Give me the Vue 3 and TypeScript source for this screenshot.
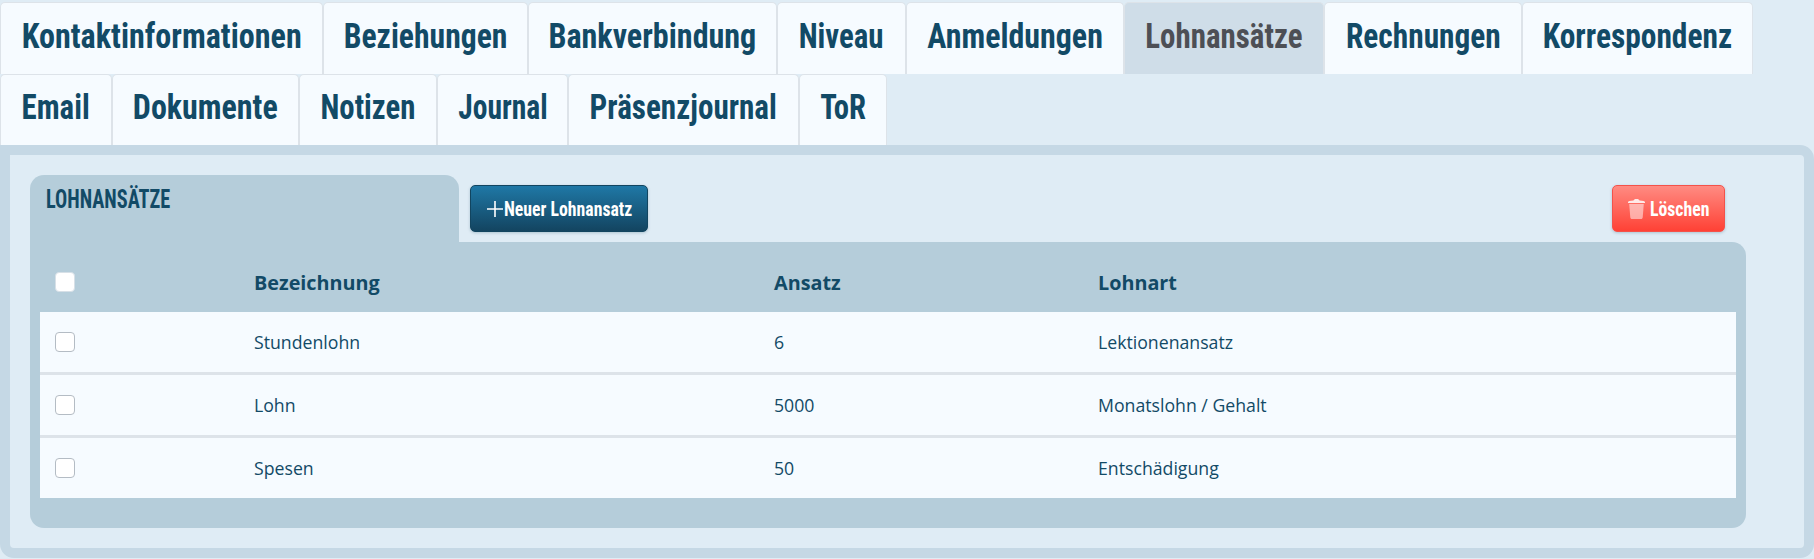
<script setup lang="ts">
interface Tab { label: string; width: number; fit: number; active?: boolean }
const tabs: Tab[] = [
  { label: 'Kontaktinformationen', width: 323, fit: 0.917 },
  { label: 'Beziehungen', width: 205, fit: 0.904 },
  { label: 'Bankverbindung', width: 249, fit: 0.917 },
  { label: 'Niveau', width: 129, fit: 0.883 },
  { label: 'Anmeldungen', width: 218, fit: 0.913 },
  { label: 'Lohnansätze', width: 200, fit: 0.884, active: true },
  { label: 'Rechnungen', width: 198, fit: 0.896 },
  { label: 'Korrespondenz', width: 231, fit: 0.898 },
  { label: 'Email', width: 112, fit: 0.882 },
  { label: 'Dokumente', width: 187, fit: 0.914 },
  { label: 'Notizen', width: 138, fit: 0.879 },
  { label: 'Journal', width: 131, fit: 0.844 },
  { label: 'Präsenzjournal', width: 231, fit: 0.89 },
  { label: 'ToR', width: 88, fit: 0.876 },
]
const rows = [
  { name: 'Stundenlohn', rate: '6', kind: 'Lektionenansatz' },
  { name: 'Lohn', rate: '5000', kind: 'Monatslohn / Gehalt' },
  { name: 'Spesen', rate: '50', kind: 'Entschädigung' },
]
</script>

<template>
  <div class="page">
    <nav class="tabs">
      <a
        v-for="t in tabs"
        :key="t.label"
        class="tab"
        :class="{ active: t.active }"
        :style="{ width: t.width + 'px' }"
      ><span class="tab-label" :style="{ transform: `scaleX(${t.fit})` }">{{ t.label }}</span></a>
    </nav>
    <section class="panel">
      <div class="head">
        <h2 class="title"><span class="title-text">LOHNANSÄTZE</span></h2>
        <button class="btn blue">
          <svg class="icon" width="16" height="16" viewBox="0 0 16 16"><path d="M8 0v16M0 8h16" stroke="#fff" stroke-width="1.6" fill="none" /></svg>
          <span class="btn-text">Neuer Lohnansatz</span>
        </button>
        <button class="btn red">
          <svg class="icon" width="17" height="20" viewBox="0 0 17 20">
            <path d="M0 3.200C0 2.200 2 1.800 5.500 1.600 5.800.6 6.500 0 8.500 0s2.700.6 3 1.600C15 1.800 17 2.200 17 3.200V4H0z" fill="#fff" opacity=".85" />
            <path d="M1.200 5h14.600l-1.100 13.500c-.1.900-.7 1.500-1.600 1.500H3.900c-.9 0-1.500-.6-1.600-1.500z" fill="#fff" opacity=".5" />
          </svg>
          <span class="btn-text">Löschen</span>
        </button>
      </div>
      <div class="box">
        <table class="grid">
          <colgroup>
            <col class="c1" /><col class="c2" /><col class="c3" /><col />
          </colgroup>
          <thead>
            <tr>
              <th><input type="checkbox" class="check head-check" /></th>
              <th>Bezeichnung</th>
              <th>Ansatz</th>
              <th>Lohnart</th>
            </tr>
          </thead>
          <tbody>
            <tr v-for="r in rows" :key="r.name">
              <td><input type="checkbox" class="check" /></td>
              <td>{{ r.name }}</td>
              <td>{{ r.rate }}</td>
              <td>{{ r.kind }}</td>
            </tr>
          </tbody>
        </table>
      </div>
    </section>
  </div>
</template>

<style>
html, body { margin: 0; background: #dfecf5; }
</style>

<style scoped>
.page {
  width: 1814px;
  height: 559px;
  background: #dfecf5;
  box-sizing: border-box;
  padding-top: 2px;
  overflow: hidden;
  font-family: "Open Sans", sans-serif;
}
.tabs {
  display: flex;
  flex-wrap: wrap;
  height: 143px;
  align-content: flex-start;
}
.tab {
  box-sizing: border-box;
  height: 71.5px;
  display: flex;
  align-items: center;
  justify-content: center;
  white-space: nowrap;
  background: #f6fbff;
  border: 1px solid #dde3e9;
  border-bottom: 0;
  border-radius: 5px 5px 0 0;
  color: #124a66;
  font-family: "Liberation Sans Narrow", "Roboto Condensed", "Liberation Sans", sans-serif;
  font-weight: 700;
  font-size: 35px;
  padding-bottom: 4px;
}
.tab-label { display: inline-block; }
.tab.active {
  background: #cfdde8;
  color: #4d4f55;
}
.panel {
  box-sizing: border-box;
  height: 413px;
  border: 10px solid #c5d8e5;
  border-radius: 0 14px 14px 14px;
  padding: 20px 58px 0 20px;
  background: #dfecf5;
}
.head {
  display: flex;
  align-items: flex-start;
  height: 67px;
}
.title {
  box-sizing: border-box;
  margin: 0;
  width: 429px;
  height: 67px;
  padding: 10px 16px;
  background: #b5cdda;
  border-radius: 14px 14px 0 0;
  color: #124a66;
  font-family: "Liberation Sans Narrow", "Roboto Condensed", "Liberation Sans", sans-serif;
  font-size: 25px;
  line-height: 30px;
  font-weight: 700;
}
.title-text {
  display: inline-block;
  transform: scaleX(0.81);
  transform-origin: left center;
}
.btn {
  box-sizing: border-box;
  height: 47px;
  margin-top: 10px;
  display: flex;
  align-items: center;
  justify-content: flex-start;
  border-radius: 5px;
  color: #fff;
  font-family: "Liberation Sans Narrow", "Roboto Condensed", "Liberation Sans", sans-serif;
  font-weight: 700;
  font-size: 20px;
  white-space: nowrap;
  padding: 0 0 0 16px;
  box-shadow: 0 1px 3px rgba(18, 74, 102, 0.25);
}
.btn-text {
  display: inline-block;
  transform: scaleX(0.887);
  transform-origin: left center;
}
.icon { flex: none; }
.blue {
  width: 178px;
  margin-left: 11px;
  gap: 1px;
  background: linear-gradient(#1f78a6, #134460);
  border: 1px solid #124560;
}
.red {
  width: 113px;
  margin-left: auto;
  margin-right: 21px;
  gap: 5px;
  padding-left: 15px;
  background: linear-gradient(#ff8b82, #ff4135);
  border: 1px solid #f4524a;
}
.box {
  box-sizing: border-box;
  height: 286px;
  padding: 0 10px 30px;
  background: #b5cdda;
  border-radius: 0 14px 14px 14px;
}
.grid {
  width: 1696px;
  table-layout: fixed;
  border-collapse: separate;
  border-spacing: 0;
  color: #124a66;
  font-size: 17.7px;
}
.c1 { width: 214px; }
.c2 { width: 520px; }
.c3 { width: 324px; }
th, td {
  box-sizing: border-box;
  padding: 0;
  text-align: left;
}
th:first-child, td:first-child { padding-left: 15px; }
th {
  height: 70px;
  font-size: 19.8px;
  font-weight: 700;
  padding-top: 10px;
}
td {
  height: 63px;
  background: #f6fbff;
  border-bottom: 3px solid #dde3e9;
}
tbody tr:last-child td {
  height: 60px;
  border-bottom: 0;
}
.check {
  appearance: none;
  display: block;
  box-sizing: border-box;
  width: 20px;
  height: 20px;
  margin: 0;
  background: #fff;
  border: 1px solid #b4bcc4;
  border-radius: 4px;
}
.head-check { border-color: #d7e0e7; }
</style>
